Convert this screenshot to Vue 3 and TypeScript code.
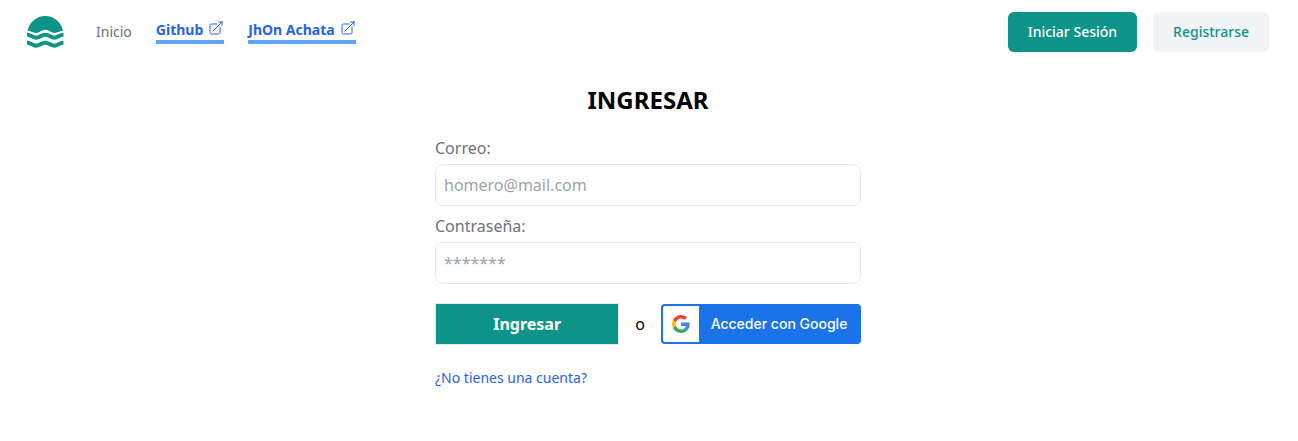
<script setup lang="ts">
import { ref } from 'vue'

interface ExternalLink {
  label: string
  href: string
}

const externalLinks: ExternalLink[] = [
  { label: 'Github', href: '#github' },
  { label: 'JhOn Achata', href: '#autor' },
]

const email = ref('')
const password = ref('')
</script>

<template>
  <div class="page">
    <header class="header">
      <nav class="nav">
        <a class="logo" href="#" aria-label="Inicio">
          <svg width="37" height="32" viewBox="0 0 37 32" aria-hidden="true">
            <path
              fill="currentColor"
              d="M0.6 14.5C2.3 6.2 9.6 0 18.3 0S34.3 6.2 36 14.5C33 14.5 31 17 27.500 17S22 13.800 18.300 13.800S12.500 17 9 17S3.500 14.500 0.600 14.500Z"
            />
            <g fill="none" stroke="currentColor" stroke-width="4">
              <path d="M0 18.700C4 18.700 5.500 21.700 9 21.700S14.500 18.700 18.300 18.700S24 21.700 27.500 21.700S32.500 18.700 36.500 18.700" />
              <path d="M0 26.700C4 26.700 5.500 29.700 9 29.700S14.500 26.700 18.300 26.700S24 29.700 27.500 29.700S32.500 26.700 36.500 26.700" />
            </g>
          </svg>
        </a>
        <a class="nav-link" href="#inicio">Inicio</a>
        <a v-for="link in externalLinks" :key="link.label" class="external" :href="link.href">
          {{ link.label }}
          <svg width="16" height="16" viewBox="0 0 24 24" aria-hidden="true">
            <path
              d="M13.5 6H5.25A2.25 2.25 0 0 0 3 8.25v10.5A2.25 2.25 0 0 0 5.25 21h10.500A2.25 2.25 0 0 0 18 18.750V10.500m-10.500 6L21 3m0 0h-5.250M21 3v5.250"
            />
          </svg>
        </a>
      </nav>
      <div class="actions">
        <button type="button" class="action primary">Iniciar Sesión</button>
        <button type="button" class="action secondary">Registrarse</button>
      </div>
    </header>

    <main class="main">
      <h1>INGRESAR</h1>
      <form @submit.prevent>
        <label for="email">Correo:</label>
        <input id="email" v-model="email" type="email" placeholder="homero@mail.com" />
        <label for="password">Contraseña:</label>
        <input id="password" v-model="password" type="password" placeholder="*******" />
        <div class="submit-row">
          <button type="submit" class="submit">Ingresar</button>
          <span>o</span>
          <button type="button" class="google">
            <span class="google-mark">
              <svg width="18" height="18" viewBox="0 0 48 48" aria-hidden="true">
                <path fill="#EA4335" d="M24 9.500c3.540 0 6.710 1.220 9.210 3.600l6.850-6.850C35.900 2.380 30.470 0 24 0 14.620 0 6.510 5.380 2.560 13.220l7.980 6.190C12.430 13.720 17.740 9.500 24 9.500z" />
                <path fill="#4285F4" d="M46.980 24.550c0-1.570-.15-3.090-.38-4.550H24v9.020h12.940c-.58 2.960-2.260 5.480-4.780 7.180l7.730 6c4.510-4.180 7.090-10.360 7.090-17.650z" />
                <path fill="#FBBC05" d="M10.530 28.590c-.48-1.450-.76-2.990-.76-4.590s.27-3.140.76-4.590l-7.980-6.190C.92 16.460 0 20.120 0 24c0 3.880.92 7.540 2.560 10.780l7.970-6.190z" />
                <path fill="#34A853" d="M24 48c6.480 0 11.930-2.130 15.890-5.810l-7.730-6c-2.150 1.450-4.920 2.300-8.160 2.300-6.260 0-11.570-4.220-13.470-9.910l-7.980 6.190C6.510 42.620 14.620 48 24 48z" />
              </svg>
            </span>
            <span class="google-label">Acceder con Google</span>
          </button>
        </div>
      </form>
      <a class="signup" href="#registro">¿No tienes una cuenta?</a>
    </main>
  </div>
</template>

<style>
body {
  margin: 0;
  background: #fff;
}
</style>

<style scoped>
.page {
  padding-right: 2px;
  font-family: "Noto Sans", sans-serif;
  font-size: 16px;
  line-height: 24px;
  color: #000;
}

.page *,
.page {
  box-sizing: border-box;
}

a {
  text-decoration: none;
}

button,
input {
  margin: 0;
  font: inherit;
}

button {
  cursor: pointer;
}

.header {
  display: flex;
  align-items: center;
  justify-content: space-between;
  height: 64px;
  padding: 0 27px;
  font-size: 14px;
  line-height: 20px;
}

.nav {
  display: flex;
  align-items: center;
  gap: 24px;
}

.logo {
  display: flex;
  margin-right: 8px;
  color: #0d9488;
}

.nav-link {
  color: #6b7280;
}

.external {
  display: flex;
  gap: 5px;
  border-bottom: 4px solid #60a5fa;
  color: #2563eb;
  font-weight: 700;
}

.external svg {
  fill: none;
  stroke: currentColor;
  stroke-width: 1.5;
  stroke-linecap: round;
  stroke-linejoin: round;
}

.actions {
  display: flex;
  gap: 16px;
}

.action {
  padding: 10px 20px;
  border: 0;
  border-radius: 6px;
  font-weight: 500;
}

.primary {
  background: #0d9488;
  color: #fff;
}

.secondary {
  background: #f3f4f6;
  color: #0d9488;
}

.main {
  max-width: 426px;
  margin: 0 auto;
  padding-top: 20px;
}

h1 {
  margin: 0 0 20px;
  font-size: 24px;
  line-height: 32px;
  font-weight: 700;
  text-align: center;
}

label {
  display: block;
  margin-bottom: 4px;
  color: #6b7280;
}

input {
  display: block;
  width: 100%;
  height: 42px;
  margin-bottom: 8px;
  padding: 8px;
  border: 1px solid #e5e7eb;
  border-radius: 8px;
  background: #fff;
}

input::placeholder {
  color: #9ca3af;
  opacity: 1;
}

.submit-row {
  display: flex;
  align-items: center;
  gap: 16px;
  margin-top: 19px;
}

.submit {
  flex: 1;
  height: 42px;
  border: 1px solid #e5e7eb;
  background: #0d9488;
  color: #fff;
  font-weight: 700;
}

.google {
  display: flex;
  align-items: center;
  width: 200px;
  height: 40px;
  padding: 2px;
  border: 0;
  border-radius: 4px;
  background: #1a73e8;
  color: #fff;
}

.google-mark {
  display: flex;
  align-items: center;
  justify-content: center;
  width: 36px;
  height: 36px;
  border-radius: 2px 0 0 2px;
  background: #fff;
}

.google-label {
  flex: 1;
  font-family: Inter, sans-serif;
  font-size: 14px;
  font-weight: 500;
  white-space: nowrap;
}

.signup {
  display: inline-block;
  margin-top: 23px;
  color: #2563eb;
  font-size: 14px;
  line-height: 20px;
}
</style>
